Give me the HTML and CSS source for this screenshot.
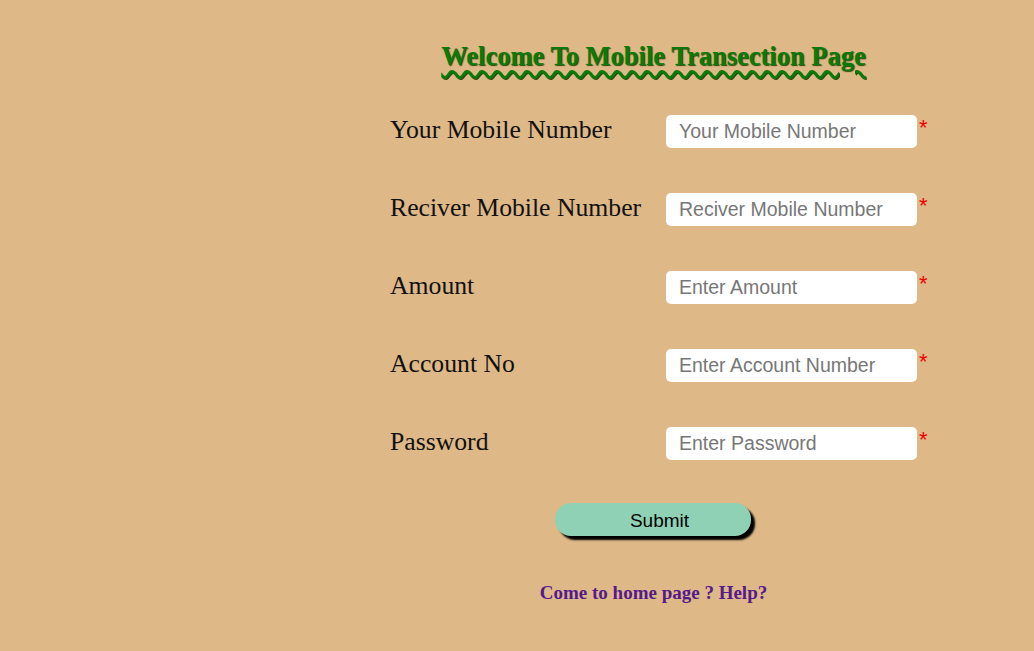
FILE: index.html
```html
<!DOCTYPE html>
<html>
<head>
<meta charset="utf-8">
<link rel="stylesheet" href="styles.css">
</head>
<body>
<div class="page">
  <h1 class="title">Welcome To Mobile Transection Page</h1>
  <form class="form">
    <div class="row">
      <label class="label">Your Mobile Number</label>
      <input class="field" type="text" placeholder="Your Mobile Number">
      <span class="req">*</span>
    </div>
    <div class="row">
      <label class="label">Reciver Mobile Number</label>
      <input class="field" type="text" placeholder="Reciver Mobile Number">
      <span class="req">*</span>
    </div>
    <div class="row">
      <label class="label">Amount</label>
      <input class="field" type="text" placeholder="Enter Amount">
      <span class="req">*</span>
    </div>
    <div class="row">
      <label class="label">Account No</label>
      <input class="field" type="text" placeholder="Enter Account Number">
      <span class="req">*</span>
    </div>
    <div class="row">
      <label class="label">Password</label>
      <input class="field" type="password" placeholder="Enter Password">
      <span class="req">*</span>
    </div>
    <div class="actions">
      <button class="submit" type="button">Submit</button>
    </div>
  </form>
  <p class="links"><a href="#" class="link">Come to home page ?</a> <a href="#" class="link">Help?</a></p>
</div>
</body>
</html>
```
FILE: styles.css
```css
html, body {
  margin: 0;
  padding: 0;
  background: #deb887;
  height: 649px;
}
body {
  font-family: "Liberation Serif", "Times New Roman", serif;
}
.page {
  width: 527px;
  padding: 41px 0 0 390px;
}
.title {
  margin: 0;
  text-align: center;
  font-size: 26.5px;
  font-weight: bold;
  color: #0a7a0a;
  text-decoration: underline wavy #0a7a0a;
  text-decoration-thickness: 2.5px;
  text-underline-offset: 5px;
  text-shadow: 1px 1px 1px #2a4a10;
  line-height: 30px;
}
.form {
  margin-top: 44px;
  display: flex;
  flex-direction: column;
  gap: 45px;
}
.row {
  display: grid;
  grid-template-columns: 276px 251px 20px;
  align-items: start;
}
.label {
  font-size: 25.7px;
  color: #111;
  line-height: 28px;
  margin-top: 1px;
}
.field {
  box-sizing: border-box;
  width: 251px;
  height: 33px;
  border: none;
  border-radius: 5px;
  background: #fff;
  padding: 0 13px;
  font-family: "Liberation Sans", Arial, sans-serif;
  font-size: 19.5px;
  color: #333;
  outline: none;
}
.field::placeholder {
  color: #777;
}
.req {
  color: #e00;
  font-family: "Liberation Sans", Arial, sans-serif;
  font-size: 22px;
  line-height: 22px;
  padding-left: 2px;
  padding-top: 2px;
}
.actions {
  display: flex;
  justify-content: center;
  margin-top: -2px;
  padding-right: 2px;
}
.submit {
  width: 196px;
  height: 33px;
  border: none;
  border-radius: 16px;
  background: #8fd1b5;
  box-shadow: 4px 4px 2px #000;
  font-family: "Liberation Sans", Arial, sans-serif;
  font-size: 19px;
  color: #000;
  padding: 2px 0 0 14px;
}
.links {
  margin: 46px 0 0;
  text-align: center;
  font-size: 19px;
  font-weight: bold;
}
.link {
  color: #551a8b;
  text-decoration: none;
}
```
